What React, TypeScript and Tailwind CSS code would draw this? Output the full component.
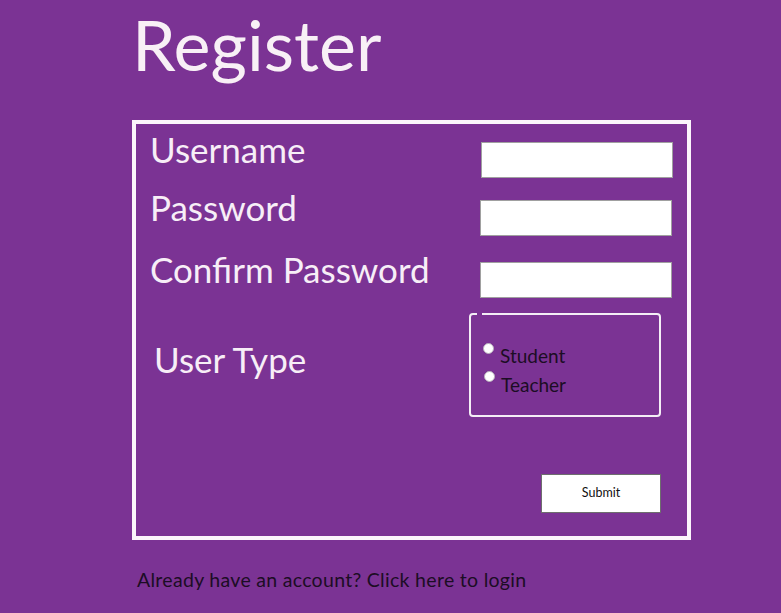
export default function App() {
  const font = { fontFamily: 'Lato, "Open Sans", sans-serif' };
  return (
    <div className="min-h-screen w-full bg-[#7b3394] overflow-hidden" style={font}>
      <h1 className="pl-[132px] pt-[9px] text-[70px] leading-none text-[#f8f0f6] font-normal">Register</h1>

      <div className="ml-[132px] mt-[41px] w-[559px] h-[420px] border-4 border-[#fbf5fb] pt-[8px] flex flex-col">
        {/* Username */}
        <div className="flex items-start">
          <span className="pl-[14px] text-[35px] leading-none text-[#f7eef7]">Username</span>
          <input className="ml-auto mr-[14px] mt-[10px] w-[192px] h-[36px] bg-white border border-[#a0a0a0] outline-none" />
        </div>
        {/* Password */}
        <div className="flex items-start mt-[12px]">
          <span className="pl-[14px] text-[35px] leading-none text-[#f7eef7]">Password</span>
          <input type="password" className="ml-auto mr-[15px] mt-[10px] w-[192px] h-[36px] bg-white border border-[#a0a0a0] outline-none" />
        </div>
        {/* Confirm */}
        <div className="flex items-start mt-[16px]">
          <span className="pl-[14px] text-[35px] leading-none text-[#f7eef7]">Confirm Password</span>
          <input type="password" className="ml-auto mr-[15px] mt-[10px] w-[192px] h-[36px] bg-white border border-[#a0a0a0] outline-none" />
        </div>
        {/* User type */}
        <div className="flex items-start mt-[15px]">
          <span className="pl-[18px] mt-[29px] text-[35px] leading-none text-[#f7eef7]">User Type</span>
          <div className="relative ml-auto mr-[26px] w-[192px] h-[104px] border-2 border-[#f4eef6] rounded-[4px] pl-[12px] pt-[28px] flex flex-col">
            <span className="absolute top-[-2px] left-[6px] w-[5px] h-[2px] bg-[#7b3394]"></span>
            <label className="flex items-start">
              <span className="w-[11px] h-[11px] rounded-full bg-white border border-[#b8b0bc]"></span>
              <span className="ml-[6px] mt-[3px] text-[19px] leading-none text-[#1c0d24]">Student</span>
            </label>
            <label className="flex items-start mt-[6px] pl-[1px]">
              <span className="w-[11px] h-[11px] rounded-full bg-white border border-[#b8b0bc]"></span>
              <span className="ml-[6px] mt-[4px] text-[19px] leading-none text-[#1c0d24]">Teacher</span>
            </label>
          </div>
        </div>
        {/* Submit */}
        <div className="flex mt-[57px]">
          <button className="ml-auto mr-[26px] w-[120px] h-[39px] bg-white border border-[#6e6e6e] text-[12.5px] text-[#111] leading-none">
            Submit
          </button>
        </div>
      </div>

      <p className="ml-[137px] mt-[30px] text-[19.5px] tracking-[0.3px] leading-none text-[#1c0d24]">
        Already have an account? Click here to login
      </p>
    </div>
  );
}
